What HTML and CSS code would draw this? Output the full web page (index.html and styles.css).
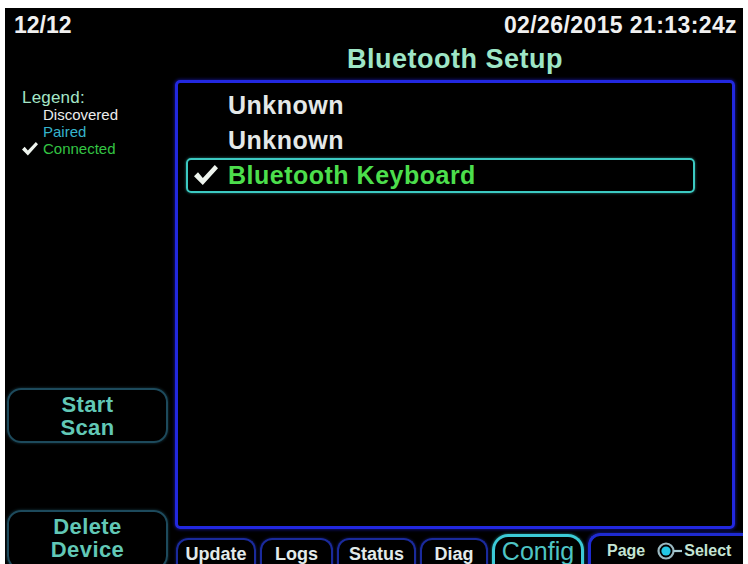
FILE: index.html
```html
<!DOCTYPE html>
<html lang="en">
<head>
<meta charset="utf-8">
<title>Bluetooth Setup</title>
<link rel="stylesheet" href="styles.css">
</head>
<body>
<div class="screen">
  <header class="topbar">
    <span class="page-count">12/12</span>
    <span class="clock">02/26/2015 21:13:24z</span>
  </header>

  <aside class="sidebar">
    <div class="legend">
      <div class="legend-title">Legend:</div>
      <div class="legend-item discovered"><span class="mark"></span>Discovered</div>
      <div class="legend-item paired"><span class="mark"></span>Paired</div>
      <div class="legend-item connected"><span class="mark"><svg class="check-sm" viewBox="0 0 30 26"><polygon points="0,14 5,9 11,16 26,0 30,4 11,25" fill="#eef4ee"/></svg></span>Connected</div>
    </div>
    <div class="softkey start">Start<br>Scan</div>
    <div class="softkey delete">Delete<br>Device</div>
  </aside>

  <h1 class="title">Bluetooth Setup</h1>

  <section class="panel">
    <ul class="devices">
      <li class="device"><span class="mark"></span><span class="name">Unknown</span></li>
      <li class="device"><span class="mark"></span><span class="name">Unknown</span></li>
      <li class="device selected connected"><span class="mark"><svg class="check" viewBox="0 0 30 26"><polygon points="0,14 5,9 11,16 26,0 30,4 11,25" fill="#eef4ee"/></svg></span><span class="name">Bluetooth Keyboard</span></li>
    </ul>
  </section>

  <nav class="tabbar">
    <div class="tab t-update">Update</div>
    <div class="tab t-logs">Logs</div>
    <div class="tab t-status">Status</div>
    <div class="tab t-diag">Diag</div>
    <div class="tab t-config active">Config</div>
    <div class="pagebox">
      <span>Page</span>
      <svg class="knob" viewBox="0 0 26 20"><circle cx="9" cy="10" r="7.5" fill="none" stroke="#9ab8c0" stroke-width="2.2"/><circle cx="9" cy="10" r="4.6" fill="#22c8e6"/><line x1="16.5" y1="10" x2="25" y2="10" stroke="#a8ccd4" stroke-width="2.2"/></svg>
      <span>Select</span>
    </div>
  </nav>
</div>
</body>
</html>
```

FILE: styles.css
```css
html, body {
  margin: 0;
  padding: 0;
  background: #ffffff;
}

body {
  font-family: "Liberation Sans", Arial, sans-serif;
}

.screen {
  margin: 8px 5px 0 5px;
  width: 738px;
  height: 556px;
  background: #000;
  overflow: hidden;
  display: grid;
  grid-template-columns: 170px 560px 8px;
  grid-template-rows: 30px 42px 449px 35px;
}

/* top bar */
.topbar {
  grid-column: 1 / 4;
  grid-row: 1;
  display: flex;
  justify-content: space-between;
  padding: 4px 6px 0 9px;
  font-size: 23px;
  font-weight: bold;
  color: #f0f0f0;
}

.clock {
  letter-spacing: 0.4px;
}

/* sidebar */
.sidebar {
  grid-column: 1;
  grid-row: 2 / 5;
  display: flex;
  flex-direction: column;
  min-height: 0;
}

.legend {
  margin: 51px 0 0 17px;
}

.legend-title {
  font-size: 17px;
  line-height: 17px;
  color: #a4e6c8;
  letter-spacing: 0.2px;
}

.legend-item {
  display: flex;
  align-items: center;
  font-size: 15px;
  line-height: 17px;
}

.legend-item .mark {
  width: 21px;
  display: flex;
  align-items: center;
}

.check-sm {
  width: 16px;
  height: 14px;
}

.legend-item.discovered { color: #ececec; }
.legend-item.paired { color: #36b4cc; }
.legend-item.connected { color: #34c444; }

.softkey {
  margin-left: 2px;
  width: 161px;
  box-sizing: border-box;
  border: 2px solid #1d4a5c;
  border-radius: 14px;
  box-shadow: 0 0 3px rgba(40, 100, 120, 0.6);
  text-align: center;
  font-size: 22px;
  font-weight: bold;
  letter-spacing: 0.4px;
  line-height: 23px;
  color: #62c8b6;
  flex: none;
}

.softkey.start {
  margin-top: 231px;
  height: 55px;
  padding-top: 3px;
}

.softkey.delete {
  margin-top: 67px;
  height: 60px;
  padding-top: 3px;
}

/* title */
.title {
  grid-column: 2;
  grid-row: 2;
  margin: 0;
  padding-top: 6px;
  text-align: center;
  font-size: 27px;
  font-weight: bold;
  letter-spacing: 0.5px;
  color: #9ee6c6;
}

/* main panel */
.panel {
  grid-column: 2;
  grid-row: 3;
  box-sizing: border-box;
  border: 3px solid #2228e0;
  border-radius: 5px;
  box-shadow: 0 0 3px 1px rgba(30, 30, 200, 0.55);
}

.devices {
  list-style: none;
  margin: 0;
  padding: 5px 0 0 8px;
}

.device {
  width: 509px;
  height: 35px;
  box-sizing: border-box;
  border: 2px solid transparent;
  border-radius: 5px;
  display: flex;
  align-items: center;
  font-size: 25px;
  font-weight: bold;
  letter-spacing: 0.5px;
  color: #e4e8e8;
}

.device .mark {
  width: 40px;
  display: flex;
  align-items: center;
}

.check {
  margin-left: 6px;
  width: 24px;
  height: 21px;
}

.device.selected {
  border-color: #3ccac2;
  box-shadow: 0 0 3px rgba(60, 200, 190, 0.6);
}

.device.connected .name {
  color: #4cde4c;
}

/* tab bar */
.tabbar {
  grid-column: 2 / 4;
  grid-row: 4;
  display: flex;
  align-items: flex-start;
  gap: 4px;
  padding-left: 1px;
}

.tab {
  flex: none;
  box-sizing: border-box;
  height: 34px;
  margin-top: 9px;
  border: 2px solid #1a2a9c;
  border-bottom: none;
  border-radius: 12px 12px 0 0;
  box-shadow: 0 0 3px rgba(30, 40, 170, 0.6);
  text-align: center;
  padding-top: 4px;
  font-size: 18px;
  font-weight: bold;
  line-height: 20px;
  color: #e2eaea;
}

.t-update { width: 80px; }
.t-logs { width: 73px; }
.t-status { width: 79px; }
.t-diag { width: 68px; }

.tab.active {
  width: 92px;
  margin-top: 5px;
  border: 3px solid #3ccad6;
  border-bottom: none;
  border-radius: 16px 16px 0 0;
  box-shadow: 0 0 3px rgba(60, 200, 210, 0.6);
  font-size: 25px;
  font-weight: normal;
  line-height: 25px;
  padding-top: 2px;
  color: #4ec4c4;
}

.pagebox {
  flex: 1;
  height: 34px;
  margin-top: 4px;
  box-sizing: border-box;
  border-top: 3px solid #1e2ad0;
  border-left: 3px solid #1e2ad0;
  border-top-left-radius: 12px;
  box-shadow: -1px -1px 3px rgba(30, 40, 200, 0.5);
  display: flex;
  align-items: flex-start;
  padding: 6px 0 0 16px;
  font-size: 16px;
  font-weight: bold;
  line-height: 18px;
  color: #c4e4d4;
}

.knob {
  width: 26px;
  height: 20px;
  margin: -1px 1px 0 12px;
}
```
